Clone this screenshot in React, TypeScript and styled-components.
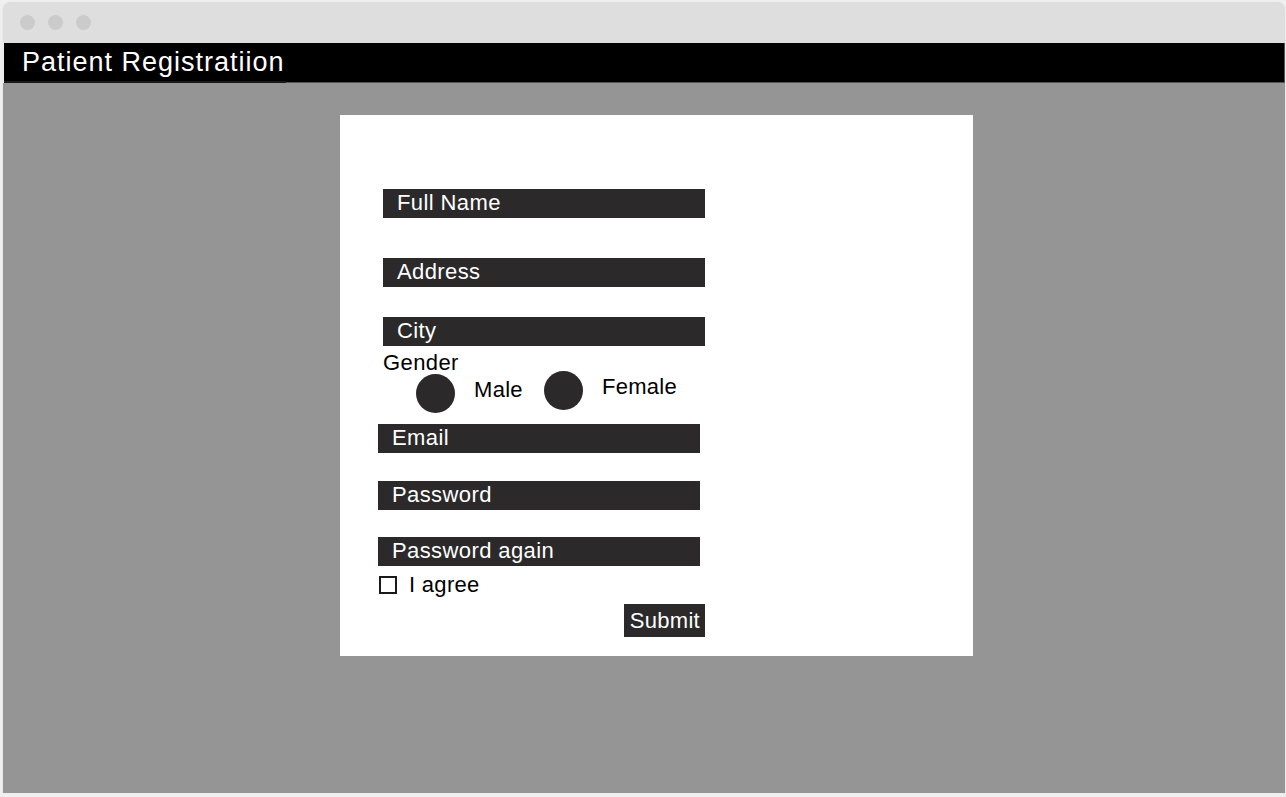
import { createGlobalStyle } from "styled-components";
import styled from "styled-components";

const GlobalStyle = createGlobalStyle`
  html, body {
    margin: 0;
    padding: 0;
    background: #efefef;
    font-family: "Liberation Sans", Arial, sans-serif;
  }
`;

const App = () => {
  return (
    <>
      <GlobalStyle />
      <BrowserWindow>
        <TitleBar>
          <Dot />
          <Dot />
          <Dot />
        </TitleBar>
        <Header>
          <HeaderTitle>Patient Registratiion</HeaderTitle>
          <HeaderRest />
        </Header>
        <Body>
          <Card>
            <Form>
              <FieldBar>Full Name</FieldBar>
              <FieldBar $gap={40}>Address</FieldBar>
              <FieldBar $gap={30}>City</FieldBar>
              <GroupLabel>Gender</GroupLabel>
              <RadioRow>
                <RadioOption>
                  <RadioDot />
                  <OptionText>Male</OptionText>
                </RadioOption>
                <RadioOption $lift={3}>
                  <RadioDot />
                  <OptionText>Female</OptionText>
                </RadioOption>
              </RadioRow>
              <FieldBar $gap={11} $shift={-5}>
                Email
              </FieldBar>
              <FieldBar $gap={28} $shift={-5}>
                Password
              </FieldBar>
              <FieldBar $gap={27} $shift={-5}>
                Password again
              </FieldBar>
              <AgreeRow>
                <CheckBox />
                <OptionText>I agree</OptionText>
              </AgreeRow>
              <SubmitButton>Submit</SubmitButton>
            </Form>
          </Card>
        </Body>
      </BrowserWindow>
    </>
  );
};

const BrowserWindow = styled.div`
  margin: 2px 1px 0 3px;
  width: 1282px;
  height: 791px;
  border-radius: 7px 7px 0 0;
  overflow: hidden;
  display: flex;
  flex-direction: column;
  box-shadow: 0 1px 2px rgba(0, 0, 0, 0.08);
`;

const TitleBar = styled.div`
  height: 41px;
  flex-shrink: 0;
  background: #dedede;
  display: flex;
  align-items: center;
  gap: 13px;
  padding-left: 17px;
`;

const Dot = styled.span`
  width: 15px;
  height: 15px;
  border-radius: 50%;
  background: #cbcbcb;
`;

const Header = styled.div`
  height: 40px;
  flex-shrink: 0;
  display: flex;
  background: #000;
  margin-left: 1px;
`;

const HeaderTitle = styled.div`
  width: 264px;
  padding-left: 18px;
  color: #fff;
  font-size: 27px;
  letter-spacing: 1px;
  line-height: 38px;
  white-space: nowrap;
  border-bottom: 2px solid #1a1a1a;
`;

const HeaderRest = styled.div`
  flex: 1;
  border-bottom: 1px solid #555;
  border-right: 1px solid #555;
`;

const Body = styled.div`
  flex: 1;
  background: #959595;
  padding: 32px 0 0 337px;
`;

const Card = styled.div`
  width: 633px;
  height: 541px;
  box-sizing: border-box;
  background: #fff;
  padding: 74px 0 0 43px;
`;

const Form = styled.div`
  width: 322px;
  display: flex;
  flex-direction: column;
  align-items: flex-start;
`;

const FieldBar = styled.div<{ $gap?: number; $shift?: number }>`
  width: 322px;
  height: 29px;
  box-sizing: border-box;
  margin-top: ${(p) => p.$gap ?? 0}px;
  margin-left: ${(p) => p.$shift ?? 0}px;
  padding-left: 14px;
  background: #2b292a;
  color: #fff;
  font-size: 22px;
  letter-spacing: 0.4px;
  line-height: 28px;
`;

const GroupLabel = styled.div`
  margin-top: 6px;
  font-size: 22px;
  letter-spacing: 0.4px;
  line-height: 22px;
  color: #000;
`;

const RadioRow = styled.div`
  display: flex;
  align-items: flex-start;
  gap: 21px;
  padding-left: 33px;
`;

const RadioOption = styled.div<{ $lift?: number }>`
  display: flex;
  align-items: flex-start;
  gap: 19px;
  margin-top: ${(p) => -(p.$lift ?? 0)}px;
`;

const RadioDot = styled.span`
  width: 39px;
  height: 39px;
  border-radius: 50%;
  background: #2b292a;
  & + span {
    margin-top: 5px;
  }
`;

const OptionText = styled.span`
  font-size: 22px;
  letter-spacing: 0.3px;
  line-height: 22px;
  color: #000;
`;

const AgreeRow = styled.div`
  display: flex;
  align-items: center;
  gap: 12px;
  margin: 8px 0 0 -4px;
`;

const CheckBox = styled.span`
  width: 18px;
  height: 18px;
  box-sizing: border-box;
  border: 2px solid #1a1a1a;
`;

const SubmitButton = styled.button`
  align-self: flex-end;
  margin-top: 8px;
  height: 33px;
  padding: 0 5px 0 6px;
  border: none;
  border-radius: 0;
  background: #2b292a;
  color: #fff;
  font-family: "Liberation Sans", Arial, sans-serif;
  font-size: 22px;
  letter-spacing: 0.3px;
  line-height: 31px;
  cursor: pointer;
`;

export default App;
